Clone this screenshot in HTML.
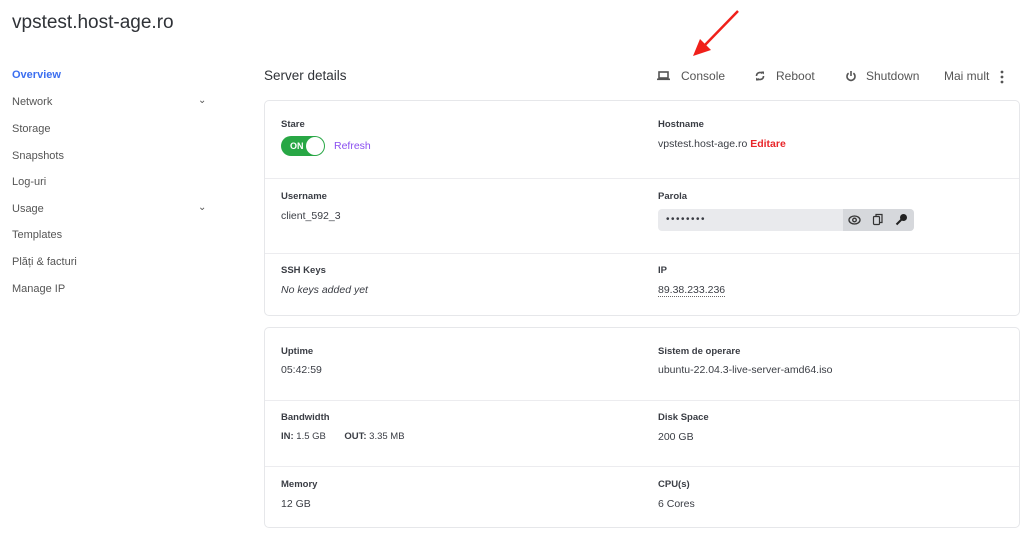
<!DOCTYPE html>
<html><head><style>
body{margin:0;width:1024px;height:533px;background:#fff;font-family:"Liberation Sans",sans-serif;color:#3a3d44;position:relative;overflow:hidden}
.a{position:absolute;white-space:nowrap}
h1{position:absolute;left:12px;top:12px;margin:0;font-size:19px;font-weight:normal;color:#2f3237}
.nav{font-size:11px;color:#555}
.card{position:absolute;left:264px;width:754px;border:1px solid #e6e7ea;border-radius:5px}
.sep{position:absolute;left:0;right:0;height:1px;background:#ececef}
.l{font-size:9.5px;font-weight:bold;color:#3a3d44}
.v{font-size:10.5px;color:#3a3d44}
.act{font-size:12px;color:#555}
</style></head><body>
<h1>vpstest.host-age.ro</h1>
<div class="a nav" style="left:12px;top:69px;color:#3b6ef0;font-weight:bold">Overview</div>
<div class="a nav" style="left:12px;top:96px">Network</div>
<div class="a nav" style="left:198px;top:95px;font-size:10px">⌄</div>
<div class="a nav" style="left:12px;top:123px">Storage</div>
<div class="a nav" style="left:12px;top:150px">Snapshots</div>
<div class="a nav" style="left:12px;top:176px">Log-uri</div>
<div class="a nav" style="left:12px;top:203px">Usage</div>
<div class="a nav" style="left:198px;top:202px;font-size:10px">⌄</div>
<div class="a nav" style="left:12px;top:229px">Templates</div>
<div class="a nav" style="left:12px;top:256px">Plăți &amp; facturi</div>
<div class="a nav" style="left:12px;top:283px">Manage IP</div>

<div class="a" style="left:264px;top:68px;font-size:13.5px;color:#2f3237">Server details</div>
<svg class="a" style="left:657px;top:70px" width="14" height="12"><rect x="2" y="2" width="9" height="6" fill="none" stroke="#555" stroke-width="1.6"/><rect x="0" y="8.5" width="13" height="1.6" fill="#555"/></svg>
<div class="a act" style="left:681px;top:69px">Console</div>
<svg class="a" style="left:754px;top:70px" width="12" height="12" viewBox="0 0 12 12"><path d="M2.5 6a3.5 3.5 0 0 1 6-2.5M9.5 6a3.5 3.5 0 0 1-6 2.5" fill="none" stroke="#555" stroke-width="1.6"/><path d="M7 1.5h3v3zM5 10.5H2v-3z" fill="#555"/></svg>
<div class="a act" style="left:776px;top:69px">Reboot</div>
<svg class="a" style="left:845px;top:70px" width="12" height="12" viewBox="0 0 12 12"><path d="M3.6 3.2a4 4 0 1 0 4.8 0" fill="none" stroke="#555" stroke-width="1.6"/><path d="M6 1v5" stroke="#555" stroke-width="1.6"/></svg>
<div class="a act" style="left:866px;top:69px">Shutdown</div>
<div class="a act" style="left:944px;top:69px">Mai mult</div>
<svg class="a" style="left:999px;top:70px" width="6" height="14"><circle cx="3" cy="2" r="1.4" fill="#555"/><circle cx="3" cy="7" r="1.4" fill="#555"/><circle cx="3" cy="12" r="1.4" fill="#555"/></svg>
<svg class="a" style="left:690px;top:8px" width="52" height="50"><line x1="48" y1="3" x2="14" y2="38" stroke="#f0201a" stroke-width="2.5"/><path d="M3 48 L10 31 L21 42Z" fill="#f0201a"/></svg>

<div class="card" style="top:100px;height:214px">
<div class="sep" style="top:77px"></div><div class="sep" style="top:152px"></div></div>
<div class="card" style="top:327px;height:199px">
<div class="sep" style="top:72px"></div><div class="sep" style="top:138px"></div></div>

<div class="a l" style="left:281px;top:119px">Stare</div>
<div class="a" style="left:281px;top:136px;width:44px;height:20px;border-radius:10px;background:#28a745"></div>
<div class="a" style="left:306px;top:137px;width:18px;height:18px;border-radius:9px;background:#fff"></div>
<div class="a" style="left:290px;top:141px;font-size:9px;font-weight:bold;color:#fff">ON</div>
<div class="a v" style="left:334px;top:140px;color:#8a4ff0">Refresh</div>
<div class="a l" style="left:658px;top:119px">Hostname</div>
<div class="a v" style="left:658px;top:138px">vpstest.host-age.ro <span style="color:#e8262a;font-weight:bold">Editare</span></div>

<div class="a l" style="left:281px;top:191px">Username</div>
<div class="a v" style="left:281px;top:210px">client_592_3</div>
<div class="a l" style="left:658px;top:191px">Parola</div>
<div class="a" style="left:658px;top:209px;width:256px;height:22px;border-radius:4px;background:#e9eaed"></div>
<div class="a" style="left:843px;top:209px;width:71px;height:22px;border-radius:0 4px 4px 0;background:#d6d8dc"></div>
<div class="a" style="left:666px;top:214px;font-size:10px;letter-spacing:1.5px">••••••••</div>
<svg class="a" style="left:848px;top:214px" width="13" height="12"><ellipse cx="6.5" cy="6" rx="5.5" ry="4" fill="none" stroke="#333" stroke-width="1.3"/><circle cx="6.5" cy="6" r="1.8" fill="none" stroke="#333" stroke-width="1.3"/></svg>
<svg class="a" style="left:872px;top:213px" width="12" height="13"><rect x="1.5" y="3.5" width="6" height="8" rx="1" fill="none" stroke="#333" stroke-width="1.2"/><path d="M4 3.5V1.5h6v8H7.5" fill="none" stroke="#333" stroke-width="1.2"/></svg>
<svg class="a" style="left:895px;top:213px" width="13" height="13"><circle cx="8.5" cy="4.5" r="3.5" fill="#222"/><path d="M6.5 6.5L1.5 11.5" stroke="#222" stroke-width="2"/></svg>

<div class="a l" style="left:281px;top:265px">SSH Keys</div>
<div class="a v" style="left:281px;top:284px;font-style:italic">No keys added yet</div>
<div class="a l" style="left:658px;top:265px">IP</div>
<div class="a v" style="left:658px;top:284px;border-bottom:1px dotted #666">89.38.233.236</div>

<div class="a l" style="left:281px;top:346px">Uptime</div>
<div class="a v" style="left:281px;top:364px">05:42:59</div>
<div class="a l" style="left:658px;top:346px">Sistem de operare</div>
<div class="a v" style="left:658px;top:364px">ubuntu-22.04.3-live-server-amd64.iso</div>
<div class="a l" style="left:281px;top:412px">Bandwidth</div>
<div class="a v" style="left:281px;top:431px;font-size:9.5px"><b>IN:</b> 1.5 GB &nbsp; &nbsp; &nbsp; <b>OUT:</b> 3.35 MB</div>
<div class="a l" style="left:658px;top:412px">Disk Space</div>
<div class="a v" style="left:658px;top:431px">200 GB</div>
<div class="a l" style="left:281px;top:479px">Memory</div>
<div class="a v" style="left:281px;top:498px">12 GB</div>
<div class="a l" style="left:658px;top:479px">CPU(s)</div>
<div class="a v" style="left:658px;top:498px">6 Cores</div>
</body></html>
